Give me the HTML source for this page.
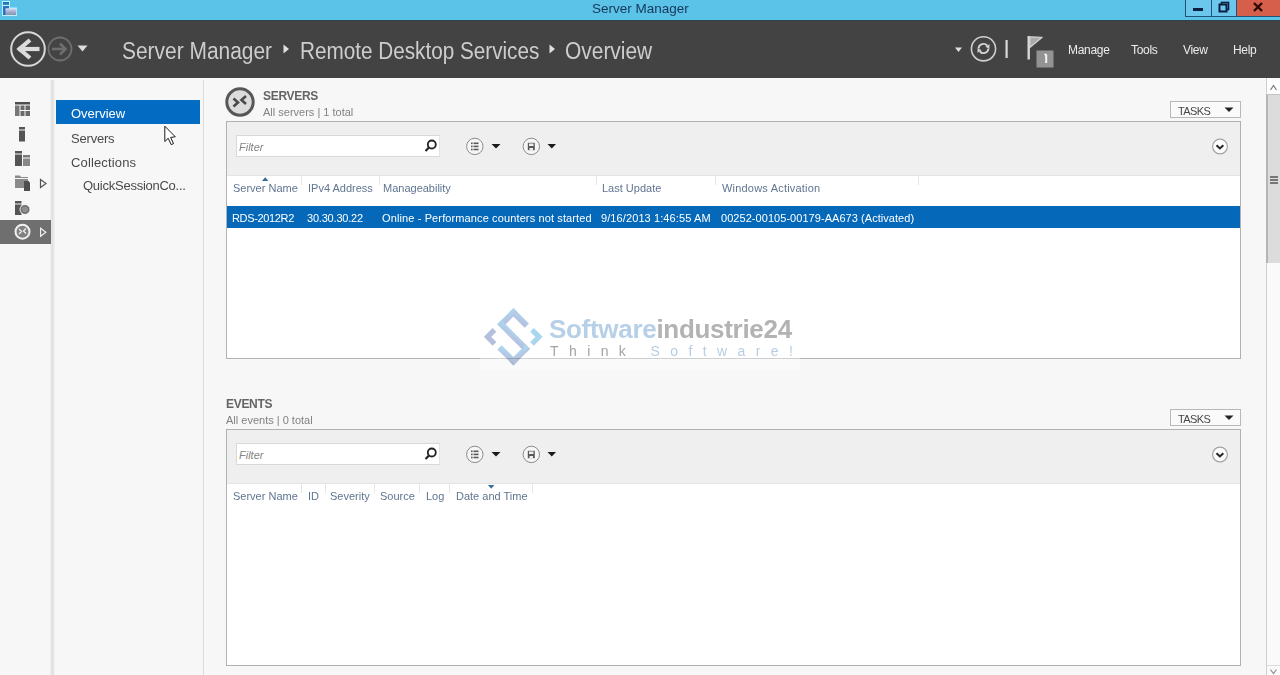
<!DOCTYPE html>
<html><head><meta charset="utf-8">
<style>
*{margin:0;padding:0;box-sizing:border-box}
html,body{width:1280px;height:675px;overflow:hidden;background:#f7f7f7;font-family:"Liberation Sans",sans-serif}
.a{position:absolute;white-space:nowrap;line-height:1}
svg{position:absolute;overflow:visible}
.crumb{color:#cdcdcd;font-size:23px;top:39.6px;transform:scaleX(0.91);transform-origin:0 0}
.menu{color:#ececec;font-size:12px;top:44px;letter-spacing:-0.3px}
.navi{font-size:13px;color:#4a4a4a}
.sect{font-size:12px;font-weight:bold;color:#646464}
.sub{font-size:11px;color:#828282}
.panel{background:#fff;border:1px solid #b2b2b2}
.tool{background:#efefef;border-bottom:1px solid #e4e4e4}
.filter{background:#fff;border:1px solid #d8d8d8;border-right-color:#e4e4e4}
.ftxt{font-size:11px;font-style:italic;color:#858585}
.col{font-size:11px;color:#607591}
.row{font-size:11px;color:#fff}
.tasks{border:1px solid #b8b8b8;background:#fafafa}
.ttxt{font-size:11px;color:#474747;letter-spacing:-0.6px}
.sep{width:1px;background:#e6e6e6}
</style></head><body>
<!-- title bar -->
<div class="a" style="left:0;top:0;width:1280px;height:20px;background:#5cc3e8"></div>
<div class="a" style="left:0;top:20px;width:1280px;height:1px;background:#2c4650"></div>
<div class="a" style="left:592px;top:2px;font-size:13.5px;color:#17365a">Server Manager</div>
<!-- app icon -->
<svg style="left:0;top:0" width="20" height="18">
  <path d="M2 1 L10 1 L10 7.5 L17 7.5 L17 16 L2 16 Z" fill="#b8f2ff"/>
  <rect x="3" y="2" width="6" height="2.8" fill="#1f78bc"/>
  <rect x="3" y="6" width="6" height="9" fill="#2c6fc4"/>
  <defs><linearGradient id="bc" x1="0" y1="0" x2="0" y2="1"><stop offset="0" stop-color="#d8e0f6"/><stop offset="0.45" stop-color="#aab2d2"/><stop offset="1" stop-color="#8890b4"/></linearGradient></defs>
  <rect x="5.5" y="8.3" width="10.7" height="6.7" fill="url(#bc)"/>
</svg>
<!-- window buttons -->
<div class="a" style="left:1185px;top:0;width:95px;height:17px;border:1px solid #1d5473;border-top:none;background:#6cc7ec"></div>
<div class="a" style="left:1211px;top:0;width:1px;height:16px;background:#1d5473"></div>
<div class="a" style="left:1236px;top:0;width:44px;height:16px;background:#d65f4c;border-left:1px solid #1d5473"></div>
<div class="a" style="left:1193px;top:8px;width:10px;height:3px;background:#0c1f40"></div>
<svg style="left:1218px;top:1px" width="12" height="12">
  <rect x="3.5" y="1.5" width="7" height="7" fill="none" stroke="#0c1f40" stroke-width="1.6"/>
  <rect x="1.5" y="3.5" width="7" height="7" fill="#6cc7ec" stroke="#0c1f40" stroke-width="2"/>
</svg>
<svg style="left:1253px;top:2px" width="10" height="10">
  <path d="M1 1 L9 9 M9 1 L1 9" stroke="#2a0a05" stroke-width="2.4"/>
</svg>

<!-- header -->
<div class="a" style="left:0;top:21px;width:1280px;height:57px;background:#444344"></div>
<svg style="left:0;top:20px" width="100" height="58">
  <circle cx="28" cy="29" r="16.8" fill="none" stroke="#d8d8d8" stroke-width="2"/>
  <path d="M18 29 L39.5 29" stroke="#dcdcdc" stroke-width="4.2"/>
  <path d="M30 20 L19.5 29 L30 38" fill="none" stroke="#dcdcdc" stroke-width="4.2" stroke-linejoin="miter"/>
  <circle cx="60" cy="29" r="11.5" fill="none" stroke="#6e6e6e" stroke-width="1.8"/>
  <path d="M52 29 L66 29" stroke="#6e6e6e" stroke-width="2.6"/>
  <path d="M60 23.5 L65.5 29 L60 34.5" fill="none" stroke="#6e6e6e" stroke-width="2.6"/>
  <path d="M77.5 25.5 L87.5 25.5 L82.5 31.5 Z" fill="#dcdcdc"/>
</svg>
<div class="a crumb" style="left:122px">Server Manager</div>
<div class="a crumb" style="left:300px;transform:scaleX(0.9)">Remote Desktop Services</div>
<div class="a crumb" style="left:565px">Overview</div>
<svg style="left:280px;top:40px" width="300" height="20">
  <path d="M3.5 4.5 L9 9 L3.5 13.5 Z" fill="#e0e0e0"/>
  <path d="M269.5 4.5 L275 9 L269.5 13.5 Z" fill="#e0e0e0"/>
</svg>
<svg style="left:940px;top:20px" width="120" height="58">
  <path d="M955 27.5 L962 27.5 L958.5 32 Z" transform="translate(-940,0)" fill="#e0e0e0"/>
  <circle cx="43.5" cy="28.8" r="12.1" fill="none" stroke="#cfcfcf" stroke-width="1.6"/>
  <path d="M38.5 28.5 A5 5 0 0 1 47.3 25.7" fill="none" stroke="#d4d4d4" stroke-width="1.9"/>
  <path d="M48.5 28.5 A5 5 0 0 1 39.7 31.3" fill="none" stroke="#d4d4d4" stroke-width="1.9"/>
  <path d="M49.6 24.2 L49.3 28.8 L45.4 26.8 Z" fill="#d4d4d4"/>
  <path d="M37.4 32.8 L37.7 28.2 L41.6 30.2 Z" fill="#d4d4d4"/>
  <rect x="65.5" y="20" width="2.2" height="18" fill="#d8d8d8"/>
  <rect x="87.5" y="16" width="2.4" height="23.5" fill="#d8d8d8"/>
  <path d="M89.8 16.8 L102.2 17.3 L89.8 27.6 Z" fill="#a9a9a9" stroke="#d2d2d2" stroke-width="1.3" stroke-linejoin="round"/>
  <rect x="96.5" y="30.5" width="17" height="17" fill="#939393"/>
  <path d="M106.2 34.2 L106.2 43 M104.6 35.2 L106.2 34.2" stroke="#f2f2f2" stroke-width="2"/>
</svg>

<div class="a menu" style="left:1068px">Manage</div>
<div class="a menu" style="left:1131px">Tools</div>
<div class="a menu" style="left:1183px">View</div>
<div class="a menu" style="left:1233px">Help</div>

<!-- left strip -->
<div class="a" style="left:0;top:78px;width:52px;height:597px;background:#f8f7f8"></div>
<div class="a" style="left:50px;top:80px;width:5px;height:595px;background:linear-gradient(90deg,#f3f3f3,#e5e5e5,#e0e0e0,#eaeaea,#f2f2f2)"></div>
<div class="a" style="left:0;top:220px;width:51px;height:24px;background:#6f6f6f"></div>
<svg style="left:0;top:78px" width="52" height="200">
  <!-- dashboard -->
  <rect x="15" y="24" width="15" height="2.5" fill="#4e4e4e"/>
  <rect x="15" y="27.5" width="4.5" height="10.5" fill="#777"/>
  <rect x="20.5" y="27.5" width="4" height="4.5" fill="#6a6a6a"/>
  <rect x="25.5" y="27.5" width="4.5" height="4.5" fill="#6a6a6a"/>
  <rect x="20.5" y="33" width="4" height="5" fill="#6a6a6a"/>
  <rect x="25.5" y="33" width="4.5" height="5" fill="#6a6a6a"/>
  <!-- local server -->
  <rect x="19" y="49" width="6" height="2.5" fill="#555"/>
  <rect x="19" y="52.5" width="6" height="11" fill="#555"/>
  <!-- all servers -->
  <rect x="15" y="73" width="7" height="2.5" fill="#555"/>
  <rect x="15" y="76.5" width="7" height="11.5" fill="#555"/>
  <rect x="23" y="77" width="7" height="2.5" fill="#7a7a7a"/>
  <rect x="23" y="80.5" width="7" height="7.5" fill="#888"/>
  <!-- file storage -->
  <path d="M15 97.5 L20 97.5 L21 99 L28 99 L28 110 L15 110 Z" fill="#8a8a8a"/>
  <rect x="15" y="100" width="13" height="1" fill="#f8f7f8"/>
  <path d="M24 103 L28.5 103 L30 104.5 L30 113 L24 113 Z" fill="#4e4e4e"/>
  <path d="M40.5 101.5 L46 105.5 L40.5 109.5 Z" fill="none" stroke="#555" stroke-width="1.2"/>
  <!-- iis -->
  <rect x="15" y="123" width="6.5" height="2.5" fill="#555"/>
  <rect x="15" y="126.5" width="6.5" height="10.5" fill="#555"/>
  <circle cx="25" cy="131.5" r="5" fill="#6e6e6e" stroke="#f8f7f8" stroke-width="1"/>
  <circle cx="25" cy="131.5" r="3" fill="#8f8f8f"/>
  <!-- rds selected -->
  <circle cx="22.5" cy="153.7" r="7" fill="#808080" stroke="#f0f0f0" stroke-width="2"/>
  <path d="M19 151 L21.5 153.5 L19 156 M26 150.5 L23.5 153 L26 155.5" fill="none" stroke="#f0f0f0" stroke-width="1.3"/>
  <path d="M40.6 150.2 L45.8 154.2 L40.6 158.2 Z" fill="none" stroke="#eee" stroke-width="1.2"/>
</svg>

<!-- nav pane -->
<div class="a" style="left:55px;top:78px;width:148px;height:597px;background:#f7f7f7"></div>
<div class="a" style="left:203px;top:80px;width:1px;height:595px;background:#dcdcdc"></div>
<div class="a" style="left:56px;top:100px;width:144px;height:24px;background:#036bc2"></div>
<div class="a navi" style="left:71px;top:106.8px;color:#fff">Overview</div>
<div class="a navi" style="left:71px;top:131.5px;letter-spacing:-0.2px">Servers</div>
<div class="a navi" style="left:71px;top:155.5px;letter-spacing:0.15px">Collections</div>
<div class="a navi" style="left:83px;top:179px;letter-spacing:-0.25px">QuickSessionCo...</div>

<!-- SERVERS section -->
<svg style="left:224px;top:86px" width="32" height="32">
  <circle cx="16" cy="16" r="13.2" fill="#dcdcdc" stroke="#575757" stroke-width="3"/>
  <path d="M9.5 12.5 L14 16.5 L9.5 20.5 M22 10 L17.5 14 L22 18" fill="none" stroke="#4a4a4a" stroke-width="2.6"/>
</svg>
<div class="a sect" style="left:263px;top:90px;letter-spacing:-0.3px">SERVERS</div>
<div class="a sub" style="left:263px;top:107px">All servers | 1 total</div>
<div class="a tasks" style="left:1170px;top:101px;width:71px;height:17px"></div>
<div class="a ttxt" style="left:1178px;top:106px">TASKS</div>
<svg style="left:1224px;top:107px" width="10" height="6"><path d="M0.5 0.5 L9.5 0.5 L5 5 Z" fill="#222"/></svg>

<div class="a panel" style="left:226px;top:121px;width:1015px;height:238px"></div>
<div class="a tool" style="left:227px;top:122px;width:1013px;height:54px"></div>
<div class="a filter" style="left:236px;top:135px;width:204px;height:22px"></div>
<div class="a ftxt" style="left:239px;top:142px">Filter</div>
<svg style="left:420px;top:135px" width="140" height="22">
  <circle cx="11.8" cy="9.5" r="4" fill="none" stroke="#222" stroke-width="1.8"/>
  <path d="M9 12.5 L5.5 16" stroke="#222" stroke-width="2.2"/>
  <circle cx="54.8" cy="11.4" r="8.2" fill="#f6f6f6" stroke="#8a8a8a" stroke-width="1"/>
  <rect x="51" y="7.5" width="1.6" height="1.6" fill="#5a5a5a"/><rect x="53.5" y="7.5" width="5" height="1.6" fill="#5a5a5a"/>
  <rect x="51" y="10.6" width="1.6" height="1.6" fill="#5a5a5a"/><rect x="53.5" y="10.6" width="5" height="1.6" fill="#5a5a5a"/>
  <rect x="51" y="13.7" width="1.6" height="1.6" fill="#5a5a5a"/><rect x="53.5" y="13.7" width="5" height="1.6" fill="#5a5a5a"/>
  <path d="M71.5 9 L80.5 9 L76 13.5 Z" fill="#1a1a1a"/>
  <circle cx="111.3" cy="11.4" r="8.2" fill="#f6f6f6" stroke="#8a8a8a" stroke-width="1"/>
  <path d="M107.8 7.8 L114.8 7.8 L114.8 15.2 L107.8 15.2 Z" fill="#5a5a5a"/>
  <rect x="109" y="8.5" width="4.5" height="2.5" fill="#eee"/>
  <rect x="109.5" y="13" width="3.5" height="2.5" fill="#eee"/>
  <path d="M127.5 9 L136 9 L131.8 13.5 Z" fill="#1a1a1a"/>
</svg>
<svg style="left:1210px;top:136px" width="20" height="20">
  <circle cx="10" cy="10.5" r="7.4" fill="#fcfcfc" stroke="#a4a4a4" stroke-width="1.2"/>
  <path d="M6.5 9.2 L9.9 12.4 L13.3 9.2" fill="none" stroke="#262626" stroke-width="2.1"/>
</svg>
<div class="a sep" style="left:301px;top:176px;height:9px"></div>
<div class="a sep" style="left:379px;top:176px;height:9px"></div>
<div class="a sep" style="left:596px;top:176px;height:9px"></div>
<div class="a sep" style="left:715px;top:176px;height:9px"></div>
<div class="a sep" style="left:918px;top:176px;height:9px"></div>
<svg style="left:262px;top:177px" width="7" height="4"><path d="M0 4 L6.4 4 L3.2 0.3 Z" fill="#2f6c9e"/></svg>
<div class="a col" style="left:233px;top:183px">Server Name</div>
<div class="a col" style="left:308px;top:183px">IPv4 Address</div>
<div class="a col" style="left:383px;top:183px">Manageability</div>
<div class="a col" style="left:602px;top:183px">Last Update</div>
<div class="a col" style="left:722px;top:183px;letter-spacing:0.2px">Windows Activation</div>
<div class="a" style="left:227px;top:206px;width:1013px;height:22px;background:#0568b9"></div>
<div class="a row" style="left:232px;top:213px;letter-spacing:-0.35px">RDS-2012R2</div>
<div class="a row" style="left:307px;top:213px;letter-spacing:-0.2px">30.30.30.22</div>
<div class="a row" style="left:382px;top:213px;letter-spacing:0.12px">Online - Performance counters not started</div>
<div class="a row" style="left:601px;top:213px;letter-spacing:0.1px">9/16/2013 1:46:55 AM</div>
<div class="a row" style="left:721px;top:213px;letter-spacing:0.05px">00252-00105-00179-AA673 (Activated)</div>

<!-- watermark -->
<div class="a" style="left:480px;top:296px;width:320px;height:74px;background:rgba(255,255,255,0.38)"></div>
<svg style="left:470px;top:300px;mix-blend-mode:multiply" width="340" height="75">
  <defs>
    <linearGradient id="wg" x1="0" y1="0" x2="1" y2="1">
      <stop offset="0" stop-color="#a9d8f0"/>
      <stop offset="1" stop-color="#b4b6d8"/>
    </linearGradient>
  </defs>
  <g transform="translate(43.4,8) rotate(45)" fill="url(#wg)" opacity="0.95">
    <rect x="0" y="0" width="22" height="6"/>
    <rect x="0" y="0" width="6" height="22"/>
    <rect x="0" y="17" width="40.6" height="6"/>
    <rect x="34.6" y="17" width="6" height="23.6"/>
    <rect x="18" y="34.6" width="22.6" height="6"/>
  </g>
  <path d="M24.5 29.8 L17.5 36.8 L24.5 43.8" fill="none" stroke="#b4bedd" stroke-width="5.2"/>
  <path d="M62 29.8 L69 36.8 L62 43.8" fill="none" stroke="#a9d6ec" stroke-width="5.2"/>
</svg>
<div class="a" style="left:549px;top:316px;font-size:26px;font-weight:bold;color:#b6d0e8;letter-spacing:-0.3px">Software<span style="color:#b3b3b3">industrie24</span></div>
<div class="a" style="left:550px;top:344px;font-size:14px;color:#a4a4a4;letter-spacing:10.4px">Think <span style="color:#b8cde2">Software!</span></div>

<!-- EVENTS section -->
<div class="a sect" style="left:226px;top:398px;letter-spacing:-0.3px">EVENTS</div>
<div class="a sub" style="left:226px;top:415px">All events | 0 total</div>
<div class="a tasks" style="left:1170px;top:409px;width:71px;height:17px"></div>
<div class="a ttxt" style="left:1178px;top:414px">TASKS</div>
<svg style="left:1224px;top:415px" width="10" height="6"><path d="M0.5 0.5 L9.5 0.5 L5 5 Z" fill="#222"/></svg>

<div class="a panel" style="left:226px;top:429px;width:1015px;height:237px"></div>
<div class="a tool" style="left:227px;top:430px;width:1013px;height:54px"></div>
<div class="a filter" style="left:236px;top:443px;width:204px;height:22px"></div>
<div class="a ftxt" style="left:239px;top:450px">Filter</div>
<svg style="left:420px;top:443px" width="140" height="22">
  <circle cx="11.8" cy="9.5" r="4" fill="none" stroke="#222" stroke-width="1.8"/>
  <path d="M9 12.5 L5.5 16" stroke="#222" stroke-width="2.2"/>
  <circle cx="54.8" cy="11.4" r="8.2" fill="#f6f6f6" stroke="#8a8a8a" stroke-width="1"/>
  <rect x="51" y="7.5" width="1.6" height="1.6" fill="#5a5a5a"/><rect x="53.5" y="7.5" width="5" height="1.6" fill="#5a5a5a"/>
  <rect x="51" y="10.6" width="1.6" height="1.6" fill="#5a5a5a"/><rect x="53.5" y="10.6" width="5" height="1.6" fill="#5a5a5a"/>
  <rect x="51" y="13.7" width="1.6" height="1.6" fill="#5a5a5a"/><rect x="53.5" y="13.7" width="5" height="1.6" fill="#5a5a5a"/>
  <path d="M71.5 9 L80.5 9 L76 13.5 Z" fill="#1a1a1a"/>
  <circle cx="111.3" cy="11.4" r="8.2" fill="#f6f6f6" stroke="#8a8a8a" stroke-width="1"/>
  <path d="M107.8 7.8 L114.8 7.8 L114.8 15.2 L107.8 15.2 Z" fill="#5a5a5a"/>
  <rect x="109" y="8.5" width="4.5" height="2.5" fill="#eee"/>
  <rect x="109.5" y="13" width="3.5" height="2.5" fill="#eee"/>
  <path d="M127.5 9 L136 9 L131.8 13.5 Z" fill="#1a1a1a"/>
</svg>
<svg style="left:1210px;top:444px" width="20" height="20">
  <circle cx="10" cy="10.5" r="7.4" fill="#fcfcfc" stroke="#a4a4a4" stroke-width="1.2"/>
  <path d="M6.5 9.2 L9.9 12.4 L13.3 9.2" fill="none" stroke="#262626" stroke-width="2.1"/>
</svg>
<div class="a sep" style="left:301px;top:484px;height:9px"></div>
<div class="a sep" style="left:325px;top:484px;height:9px"></div>
<div class="a sep" style="left:374px;top:484px;height:9px"></div>
<div class="a sep" style="left:419px;top:484px;height:9px"></div>
<div class="a sep" style="left:449px;top:484px;height:9px"></div>
<div class="a sep" style="left:532px;top:484px;height:9px"></div>
<svg style="left:488px;top:485px" width="7" height="4"><path d="M0 0 L6.4 0 L3.2 3.7 Z" fill="#3a6d98"/></svg>
<div class="a col" style="left:233px;top:491px">Server Name</div>
<div class="a col" style="left:308px;top:491px">ID</div>
<div class="a col" style="left:330px;top:491px">Severity</div>
<div class="a col" style="left:380px;top:491px">Source</div>
<div class="a col" style="left:426px;top:491px">Log</div>
<div class="a col" style="left:456px;top:491px">Date and Time</div>

<!-- scrollbar -->
<div class="a" style="left:1266px;top:78px;width:14px;height:597px;background:#fafafa;border-left:1px solid #cfcfcf"></div>
<div class="a" style="left:1267px;top:80px;width:13px;height:14px;background:#fff"></div>
<svg style="left:1267px;top:80px" width="13" height="14"><path d="M3.5 10 L6.5 5.5 L9.5 10" fill="none" stroke="#7a7a7a" stroke-width="1.2"/></svg>
<div class="a" style="left:1266px;top:94px;width:14px;height:169px;background:#dcdcdc;border-left:2px solid #b5b5b5;border-top:1px solid #c4c4c4"></div>
<div class="a" style="left:1270px;top:176px;width:8px;height:1.5px;background:#777"></div>
<div class="a" style="left:1270px;top:179px;width:8px;height:1.5px;background:#777"></div>
<div class="a" style="left:1270px;top:182px;width:8px;height:1.5px;background:#777"></div>
<div class="a" style="left:1267px;top:665px;width:13px;height:1px;background:#dcdcdc"></div>
<svg style="left:1267px;top:666px" width="13" height="9"><path d="M3.5 3.5 L6.5 7.5 L9.5 3.5" fill="none" stroke="#8a8a8a" stroke-width="1.1"/></svg>

<!-- cursor -->
<svg style="left:163px;top:125px" width="16" height="24">
  <path d="M1.8 1.2 L1.8 16.5 L5.2 13.3 L8.2 19.6 L10.5 18.6 L7.6 12.4 L12.3 11.8 Z" fill="#fff" stroke="#1a1a1a" stroke-width="1" stroke-linejoin="round"/>
</svg>
</body></html>
